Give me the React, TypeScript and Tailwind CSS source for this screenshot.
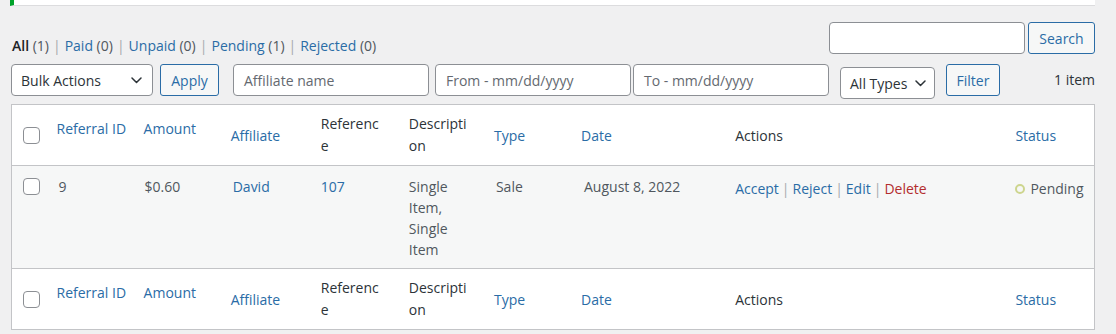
import React from "react";

const font = { fontFamily: '"Open Sans", "Noto Sans", Arial, sans-serif' };

function Chevron({ className = "" }: { className?: string }) {
  return (
    <svg width="11" height="7" viewBox="0 0 11 7" fill="none" className={className}>
      <path d="M1 1l4.5 4.5L10 1" stroke="#2c3338" strokeWidth="1.5" strokeLinecap="round" strokeLinejoin="round" />
    </svg>
  );
}

function Checkbox() {
  return <span className="block w-[17px] h-[17px] rounded-[4px] border border-[#8c8f94] bg-white" />;
}

function Sep() {
  return <span className="text-[#a7aaad] mx-[4px]">|</span>;
}

function HeaderRow({ top }: { top?: boolean }) {
  const th = "px-[10px] text-left font-normal align-middle whitespace-nowrap";
  return (
    <tr className={top ? "border-b border-[#c3c4c7] bg-white" : "border-t border-[#c3c4c7] bg-white"}>
      <td className="pl-[11px] align-middle h-[61px]">
        <Checkbox />
      </td>
      <th className={`${th} pb-[13px] text-[#2a6ca6]`}>Referral ID</th>
      <th className={`${th} pb-[13px] text-[#2a6ca6]`}>Amount</th>
      <th className={`${th} text-[#2a6ca6]`}>Affiliate</th>
      <th className={`${th} text-[#2c3338] leading-[22px]`}>
        Referenc
        <br />e
      </th>
      <th className={`${th} text-[#2c3338] leading-[22px]`}>
        Descripti
        <br />
        on
      </th>
      <th className={`${th} text-[#2a6ca6]`}>Type</th>
      <th className={`${th} text-[#2a6ca6]`}>Date</th>
      <th className={`${th} text-[#2c3338]`}>Actions</th>
      <th className={`${th} text-[#2a6ca6]`}>Status</th>
    </tr>
  );
}

export default function App() {
  const td = "px-[10px] pt-[10px] pb-[8px] align-top";
  return (
    <div className="bg-[#f0f0f1] w-[1116px] h-[334px] overflow-hidden text-[14px] leading-[21px] text-[#50575e]" style={font}>
      <div className="ml-[10px] w-[1085px] h-[6px] bg-white border-l-4 border-[#00a32a] border-b border-b-[#dcdcde]" />

      <div className="pl-[11px] pr-[21px]">
        <div className="mt-[16px] h-[32px] flex justify-between items-start">
          <ul className="flex items-center pt-[13px] pl-[1px]">
            <li>
              <span className="font-semibold text-[#1d2327]">All</span> (1)
              <Sep />
            </li>
            <li>
              <span className="text-[#2a6ca6]">Paid</span> (0)
              <Sep />
            </li>
            <li>
              <span className="text-[#2a6ca6]">Unpaid</span> (0)
              <Sep />
            </li>
            <li>
              <span className="text-[#2a6ca6]">Pending</span> (1)
              <Sep />
            </li>
            <li>
              <span className="text-[#2a6ca6]">Rejected</span> (0)
            </li>
          </ul>
          <div className="flex gap-[3px]">
            <div className="w-[196px] h-[32px] rounded-[4px] border border-[#8c8f94] bg-white" />
            <button className="w-[67px] h-[32px] rounded-[3px] border border-[#2a6ca6] bg-[#f6f7f7] text-[#2a6ca6]">
              Search
            </button>
          </div>
        </div>

        <div className="mt-[10px] flex items-start">
          <div className="w-[142px] h-[32px] rounded-[4px] border border-[#8c8f94] bg-white flex items-center justify-between pl-[9px] pr-[10px] text-[#2c3338]">
            <span>Bulk Actions</span>
            <Chevron />
          </div>
          <button className="ml-[7px] w-[59px] h-[32px] rounded-[3px] border border-[#2a6ca6] bg-[#f6f7f7] text-[#2a6ca6]">
            Apply
          </button>
          <div className="ml-[14px] w-[196px] h-[32px] rounded-[4px] border border-[#8c8f94] bg-white flex items-center px-[10px] text-[#646970]">
            Affiliate name
          </div>
          <div className="ml-[6px] w-[196px] h-[32px] rounded-[4px] border border-[#8c8f94] bg-white flex items-center px-[10px] text-[#646970]">
            From - mm/dd/yyyy
          </div>
          <div className="ml-[2px] w-[196px] h-[32px] rounded-[4px] border border-[#8c8f94] bg-white flex items-center px-[10px] text-[#646970]">
            To - mm/dd/yyyy
          </div>
          <div className="ml-[11px] mt-[3px] w-[95px] h-[32px] rounded-[4px] border border-[#8c8f94] bg-white flex items-center justify-between pl-[9px] pr-[8px] text-[#2c3338]">
            <span>All Types</span>
            <Chevron />
          </div>
          <button className="ml-[11px] w-[54px] h-[32px] rounded-[3px] border border-[#2a6ca6] bg-[#f6f7f7] text-[#2a6ca6]">
            Filter
          </button>
          <div className="ml-auto pt-[5px] text-[#2c3338]">1 item</div>
        </div>

        <table className="mt-[5px] w-full table-fixed border border-[#c3c4c7] border-collapse">
          <colgroup>
            <col className="w-[35px]" />
            <col className="w-[87px]" />
            <col className="w-[87px]" />
            <col className="w-[90px]" />
            <col className="w-[88px]" />
            <col className="w-[85px]" />
            <col className="w-[87px]" />
            <col className="w-[154px]" />
            <col className="w-[280px]" />
            <col className="w-[89px]" />
          </colgroup>
          <thead>
            <HeaderRow top />
          </thead>
          <tbody>
            <tr className="bg-[#f6f7f7]">
              <td className="pl-[11px] pt-[12px] align-top">
                <Checkbox />
              </td>
              <td className={`${td} pl-[12px]`}>9</td>
              <td className={`${td} pl-[11px]`}>$0.60</td>
              <td className={`${td} pl-[12px] text-[#2a6ca6]`}>David</td>
              <td className={`${td} text-[#2a6ca6]`}>107</td>
              <td className={td}>
                Single
                <br />
                Item,
                <br />
                Single
                <br />
                Item
              </td>
              <td className={`${td} pl-[12px]`}>Sale</td>
              <td className={`${td} pl-[13px]`}>August 8, 2022</td>
              <td className={`${td} pt-[12px]`}>
                <span className="text-[#2a6ca6]">Accept</span>
                <span className="text-[#a7aaad] mx-[3px]">|</span>
                <span className="text-[#2a6ca6]">Reject</span>
                <span className="text-[#a7aaad] mx-[3px]">|</span>
                <span className="text-[#2a6ca6]">Edit</span>
                <span className="text-[#a7aaad] mx-[3px]">|</span>
                <span className="text-[#b32d2e]">Delete</span>
              </td>
              <td className={`${td} pt-[12px]`}>
                <span className="flex items-center gap-[5px]">
                  <span className="w-[10px] h-[10px] rounded-full border-2 border-[#cdd58e]" />
                  Pending
                </span>
              </td>
            </tr>
          </tbody>
          <tfoot>
            <HeaderRow />
          </tfoot>
        </table>
      </div>
    </div>
  );
}
